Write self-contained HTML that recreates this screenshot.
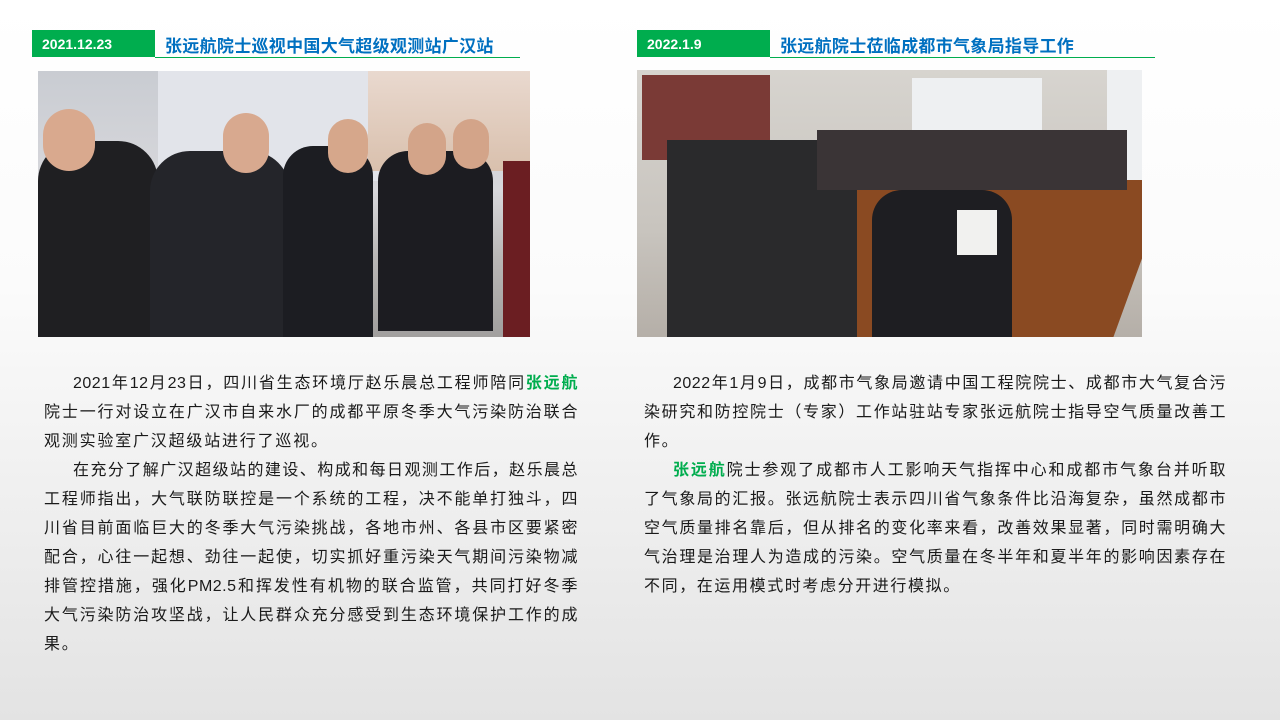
<!DOCTYPE html>
<html><head><meta charset="utf-8"><style>
*{margin:0;padding:0;box-sizing:border-box}
body{width:1280px;height:720px;overflow:hidden;position:relative;background:linear-gradient(#ffffff 0%,#fbfbfb 40%,#e3e3e3 100%);font-family:"Liberation Sans","Noto Sans CJK SC",sans-serif}
.tag{position:absolute;background:#00ad4e;color:#fff;font-size:14px;font-weight:bold;height:27px;line-height:28px;padding-left:10px}
.title{position:absolute;color:#0070c0;font-size:17px;font-weight:bold;letter-spacing:0.3px}
.line{position:absolute;height:1px;background:#00ad4e}
.txt{position:absolute;font-size:16px;color:#1a1a1a;letter-spacing:1.8px;line-height:29px}
.txt div{white-space:nowrap}
.txt div.j{text-align:justify;text-align-last:justify;letter-spacing:0.5px;text-justify:inter-character}
.g{color:#00ad4e;font-weight:bold}
.ind{padding-left:29px}
.img{position:absolute;overflow:hidden}
</style></head><body>
<div class="tag" style="left:32px;top:30px;width:123px">2021.12.23</div>
<div class="title" style="left:165px;top:32px">张远航院士巡视中国大气超级观测站广汉站</div>
<div class="line" style="left:155px;top:57px;width:365px"></div>
<div class="tag" style="left:637px;top:30px;width:133px">2022.1.9</div>
<div class="title" style="left:780px;top:32px">张远航院士莅临成都市气象局指导工作</div>
<div class="line" style="left:770px;top:57px;width:385px"></div>

<div class="img" style="left:38px;top:71px;width:492px;height:266px;background:linear-gradient(#c9ccd2 0%,#d8d8dc 45%,#b9b7b6 70%,#a19f9e 100%)">
 <div style="position:absolute;left:120px;top:0;width:250px;height:110px;background:#e2e4ea"></div>
 <div style="position:absolute;left:330px;top:0;width:162px;height:100px;background:linear-gradient(#e9d9cf,#d9c0ad)"></div>
 <div style="position:absolute;left:0;top:70px;width:120px;height:196px;background:#1f1f22;border-radius:40px 40px 0 0"></div>
 <div style="position:absolute;left:112px;top:80px;width:140px;height:186px;background:#24252a;border-radius:40px 40px 0 0"></div>
 <div style="position:absolute;left:245px;top:75px;width:90px;height:191px;background:#1c1d22;border-radius:30px 30px 0 0"></div>
 <div style="position:absolute;left:340px;top:80px;width:115px;height:180px;background:#1c1c21;border-radius:30px 30px 0 0"></div>
 <div style="position:absolute;left:465px;top:90px;width:27px;height:176px;background:#6b1e22"></div>
 <div style="position:absolute;left:5px;top:38px;width:52px;height:62px;background:#d9a98e;border-radius:26px"></div>
 <div style="position:absolute;left:185px;top:42px;width:46px;height:60px;background:#d8a98f;border-radius:23px"></div>
 <div style="position:absolute;left:290px;top:48px;width:40px;height:54px;background:#d6a78b;border-radius:20px"></div>
 <div style="position:absolute;left:370px;top:52px;width:38px;height:52px;background:#d3a489;border-radius:19px"></div>
 <div style="position:absolute;left:415px;top:48px;width:36px;height:50px;background:#d3a489;border-radius:18px"></div>
</div>

<div class="img" style="left:637px;top:70px;width:505px;height:267px;background:linear-gradient(#d7d4cf,#c8c4be 60%,#b5afa8)">
 <div style="position:absolute;left:5px;top:5px;width:128px;height:85px;background:#7a3a36"></div>
 <div style="position:absolute;left:275px;top:8px;width:130px;height:70px;background:#eef0f2"></div>
 <div style="position:absolute;left:470px;top:0;width:35px;height:110px;background:#eef0f2"></div>
 <div style="position:absolute;left:180px;top:110px;width:325px;height:157px;background:#8a4a22;transform:skewX(-20deg)"></div>
 <div style="position:absolute;left:30px;top:70px;width:190px;height:197px;background:#2a2a2c"></div>
 <div style="position:absolute;left:180px;top:60px;width:310px;height:60px;background:#3a3436"></div>
 <div style="position:absolute;left:235px;top:120px;width:140px;height:147px;background:#1e1e22;border-radius:30px 30px 0 0"></div>
 <div style="position:absolute;left:320px;top:140px;width:40px;height:45px;background:#f1f1ef"></div>
</div>

<div class="txt" style="left:44px;top:369px;width:534px">
<div class="ind j">2021年12月23日，四川省生态环境厅赵乐晨总工程师陪同<span class="g">张远航</span></div>
<div class="j">院士一行对设立在广汉市自来水厂的成都平原冬季大气污染防治联合</div>
<div>观测实验室广汉超级站进行了巡视。</div>
<div class="ind j">在充分了解广汉超级站的建设、构成和每日观测工作后，赵乐晨总</div>
<div class="j">工程师指出，大气联防联控是一个系统的工程，决不能单打独斗，四</div>
<div class="j">川省目前面临巨大的冬季大气污染挑战，各地市州、各县市区要紧密</div>
<div class="j">配合，心往一起想、劲往一起使，切实抓好重污染天气期间污染物减</div>
<div class="j">排管控措施，强化PM2.5和挥发性有机物的联合监管，共同打好冬季</div>
<div class="j">大气污染防治攻坚战，让人民群众充分感受到生态环境保护工作的成</div>
<div>果。</div>
</div>

<div class="txt" style="left:644px;top:369px;width:582px;letter-spacing:1.6px">
<div class="ind j">2022年1月9日，成都市气象局邀请中国工程院院士、成都市大气复合污</div>
<div class="j">染研究和防控院士（专家）工作站驻站专家张远航院士指导空气质量改善工</div>
<div>作。</div>
<div class="ind j"><span class="g">张远航</span>院士参观了成都市人工影响天气指挥中心和成都市气象台并听取</div>
<div class="j">了气象局的汇报。张远航院士表示四川省气象条件比沿海复杂，虽然成都市</div>
<div class="j">空气质量排名靠后，但从排名的变化率来看，改善效果显著，同时需明确大</div>
<div class="j">气治理是治理人为造成的污染。空气质量在冬半年和夏半年的影响因素存在</div>
<div>不同，在运用模式时考虑分开进行模拟。</div>
</div>
</body></html>
